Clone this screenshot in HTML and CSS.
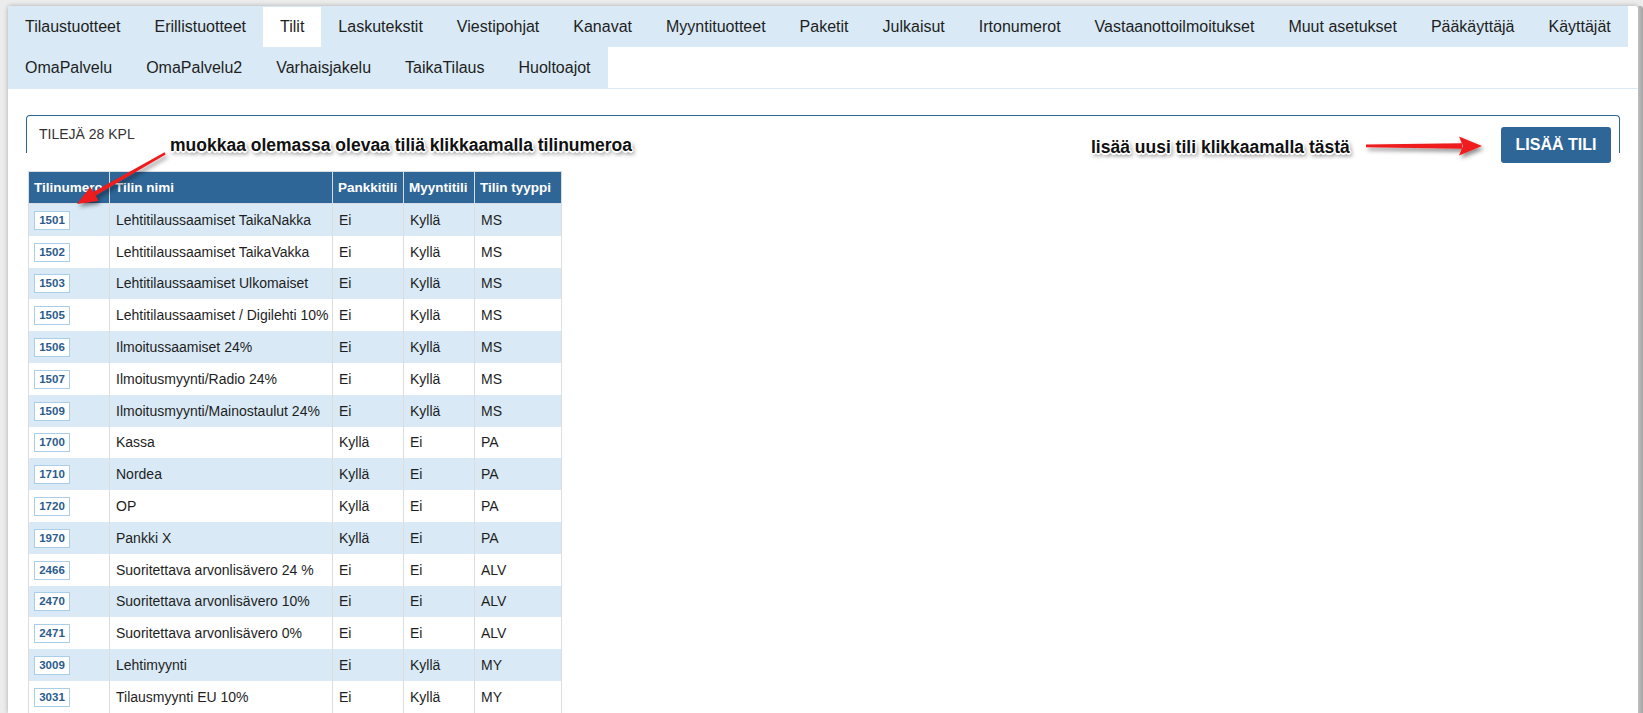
FILE: index.html
```html
<!DOCTYPE html>
<html lang="fi">
<head>
<meta charset="utf-8">
<title>Tilit</title>
<link rel="stylesheet" href="styles.css">
</head>
<body>
<div class="screen">
  <div class="card">
    <nav class="tabs">
      <a class="tab">Tilaustuotteet</a>
      <a class="tab">Erillistuotteet</a>
      <a class="tab active">Tilit</a>
      <a class="tab">Laskutekstit</a>
      <a class="tab">Viestipohjat</a>
      <a class="tab">Kanavat</a>
      <a class="tab">Myyntituotteet</a>
      <a class="tab">Paketit</a>
      <a class="tab">Julkaisut</a>
      <a class="tab">Irtonumerot</a>
      <a class="tab">Vastaanottoilmoitukset</a>
      <a class="tab">Muut asetukset</a>
      <a class="tab">Pääkäyttäjä</a>
      <a class="tab">Käyttäjät</a>
      <a class="tab">OmaPalvelu</a>
      <a class="tab">OmaPalvelu2</a>
      <a class="tab">Varhaisjakelu</a>
      <a class="tab">TaikaTilaus</a>
      <a class="tab">Huoltoajot</a>
    </nav>
    <main class="content">
      <div class="panel-head">
        <span class="panel-title">TILEJÄ 28 KPL</span>
        <button class="btn-add">LISÄÄ TILI</button>
      </div>
      <table class="accounts">
        <colgroup>
          <col class="c-num"><col class="c-name"><col class="c-bank"><col class="c-sale"><col class="c-type">
        </colgroup>
        <thead>
          <tr><th>Tilinumero</th><th>Tilin nimi</th><th>Pankkitili</th><th>Myyntitili</th><th>Tilin tyyppi</th></tr>
        </thead>
        <tbody>
          <tr><td><a class="acct">1501</a></td><td>Lehtitilaussaamiset TaikaNakka</td><td>Ei</td><td>Kyllä</td><td>MS</td></tr>
          <tr><td><a class="acct">1502</a></td><td>Lehtitilaussaamiset TaikaVakka</td><td>Ei</td><td>Kyllä</td><td>MS</td></tr>
          <tr><td><a class="acct">1503</a></td><td>Lehtitilaussaamiset Ulkomaiset</td><td>Ei</td><td>Kyllä</td><td>MS</td></tr>
          <tr><td><a class="acct">1505</a></td><td>Lehtitilaussaamiset / Digilehti 10%</td><td>Ei</td><td>Kyllä</td><td>MS</td></tr>
          <tr><td><a class="acct">1506</a></td><td>Ilmoitussaamiset 24%</td><td>Ei</td><td>Kyllä</td><td>MS</td></tr>
          <tr><td><a class="acct">1507</a></td><td>Ilmoitusmyynti/Radio 24%</td><td>Ei</td><td>Kyllä</td><td>MS</td></tr>
          <tr><td><a class="acct">1509</a></td><td>Ilmoitusmyynti/Mainostaulut 24%</td><td>Ei</td><td>Kyllä</td><td>MS</td></tr>
          <tr><td><a class="acct">1700</a></td><td>Kassa</td><td>Kyllä</td><td>Ei</td><td>PA</td></tr>
          <tr><td><a class="acct">1710</a></td><td>Nordea</td><td>Kyllä</td><td>Ei</td><td>PA</td></tr>
          <tr><td><a class="acct">1720</a></td><td>OP</td><td>Kyllä</td><td>Ei</td><td>PA</td></tr>
          <tr><td><a class="acct">1970</a></td><td>Pankki X</td><td>Kyllä</td><td>Ei</td><td>PA</td></tr>
          <tr><td><a class="acct">2466</a></td><td>Suoritettava arvonlisävero 24 %</td><td>Ei</td><td>Ei</td><td>ALV</td></tr>
          <tr><td><a class="acct">2470</a></td><td>Suoritettava arvonlisävero 10%</td><td>Ei</td><td>Ei</td><td>ALV</td></tr>
          <tr><td><a class="acct">2471</a></td><td>Suoritettava arvonlisävero 0%</td><td>Ei</td><td>Ei</td><td>ALV</td></tr>
          <tr><td><a class="acct">3009</a></td><td>Lehtimyynti</td><td>Ei</td><td>Kyllä</td><td>MY</td></tr>
          <tr><td><a class="acct">3031</a></td><td>Tilausmyynti EU 10%</td><td>Ei</td><td>Kyllä</td><td>MY</td></tr>
        </tbody>
      </table>
    </main>
  </div>
  <div class="edge"></div>

  <div class="note note-edit">muokkaa olemassa olevaa tiliä klikkaamalla tilinumeroa</div>
  <div class="note note-add">lisää uusi tili klikkaamalla tästä</div>

  <svg class="arrows" width="1643" height="713" viewBox="0 0 1643 713" xmlns="http://www.w3.org/2000/svg">
    <defs>
      <filter id="shadow" x="-20%" y="-40%" width="150%" height="200%">
        <feDropShadow dx="2" dy="3" stdDeviation="2" flood-color="#000" flood-opacity="0.45"/>
      </filter>
    </defs>
    <g filter="url(#shadow)" fill="#ee1c1c">
      <polygon points="164.6,152.2 165.6,154.4 95.6,195.6 93.6,191.8"/>
      <polygon points="77,204 90.2,187 94.5,193.5 98.3,200.8"/>
      <polygon points="1366,144.6 1462,143.2 1462,148.8 1366,147.2"/>
      <polygon points="1482,146 1459,136.5 1463,146 1459,155.5"/>
    </g>
  </svg>
</div>
</body>
</html>
```

FILE: styles.css
```css
html, body {
  margin: 0;
  padding: 0;
  height: 713px;
  overflow: hidden;
}

body {
  background: #ececec;
  font-family: "Liberation Sans", Arial, sans-serif;
  color: #222;
}

.screen {
  position: relative;
  display: flex;
  height: 713px;
}

.card {
  flex: 1;
  margin: 6px 0 0 8px;
  background: #fff;
  border-radius: 3px 3px 0 0;
  box-shadow: 0 0 5px rgba(0, 0, 0, 0.28);
  overflow: hidden;
}

.edge {
  width: 5px;
  margin-top: 6px;
  background: linear-gradient(to right, #bdbdbd, #a6a6a6);
  border-radius: 0 3px 0 0;
}

/* navigation */
.tabs {
  display: flex;
  flex-wrap: wrap;
  border-bottom: 1px solid #dbeaf5;
}

.tab {
  padding: 10px 17px;
  font-size: 16px;
  line-height: 21px;
  color: #1e1e1e;
  background: #d9eaf6;
  white-space: nowrap;
}

.tab.active {
  background: #fff;
  box-shadow: inset 0 1px 0 #d9eaf6;
}

/* content */
.content {
  padding: 26px 18px 0 18px;
}

.panel-head {
  display: flex;
  align-items: flex-start;
  height: 38px;
  box-sizing: border-box;
  border: 1px solid #2e6697;
  border-bottom: none;
  border-radius: 4px 4px 0 0;
  padding: 0 8px 0 12px;
}

.panel-title {
  padding-top: 8px;
  font-size: 14px;
  line-height: 20px;
  color: #333;
}

.btn-add {
  margin-left: auto;
  margin-top: 11px;
  height: 36px;
  width: 110px;
  flex: none;
  border: none;
  border-radius: 3px;
  background: #2e6697;
  color: #fff;
  font-family: "Liberation Sans", Arial, sans-serif;
  font-weight: bold;
  font-size: 16px;
  padding: 0;
}

/* table */
.accounts {
  margin: 18px 0 0 2px;
  border-collapse: collapse;
  table-layout: fixed;
  width: 533px;
  font-size: 14px;
}

.c-num { width: 81px; }
.c-name { width: 223px; }
.c-bank { width: 71px; }
.c-sale { width: 71px; }
.c-type { width: 87px; }

.accounts th {
  height: 31px;
  padding: 0 5px;
  background: #2e6697;
  color: #fff;
  font-size: 13.5px;
  font-weight: bold;
  text-align: left;
  border: 1px solid #d6dde4;
  white-space: nowrap;
  overflow: visible;
}

.accounts td {
  height: 31.8px;
  padding: 0 6px;
  border-left: 1px solid #dddddd;
  border-right: 1px solid #dddddd;
  white-space: nowrap;
  color: #1e1e1e;
}

.accounts td:first-child {
  padding-left: 5px;
}

.accounts tbody tr:nth-child(odd) td {
  background: #d9eaf6;
}

.acct {
  display: inline-block;
  box-sizing: border-box;
  width: 36px;
  height: 19px;
  margin-top: 1px;
  border: 1px solid #aacde8;
  background: #fff;
  color: #2b5c8c;
  font-size: 11.5px;
  font-weight: bold;
  line-height: 17px;
  text-align: center;
  vertical-align: middle;
}

/* annotations */
.note {
  position: absolute;
  font-weight: bold;
  font-size: 17.5px;
  line-height: 20px;
  color: #111;
  white-space: nowrap;
  text-shadow:
    -1px -1px 0 #fff, 1px -1px 0 #fff, -1px 1px 0 #fff, 1px 1px 0 #fff,
    0 -1.5px 0 #fff, 0 1.5px 0 #fff, -1.5px 0 0 #fff, 1.5px 0 0 #fff,
    2px 3px 4px rgba(0, 0, 0, 0.6);
}

.note-edit {
  left: 170px;
  top: 135px;
}

.note-add {
  left: 1091px;
  top: 137px;
}

.arrows {
  position: absolute;
  top: 0;
  left: 0;
  pointer-events: none;
}
```
